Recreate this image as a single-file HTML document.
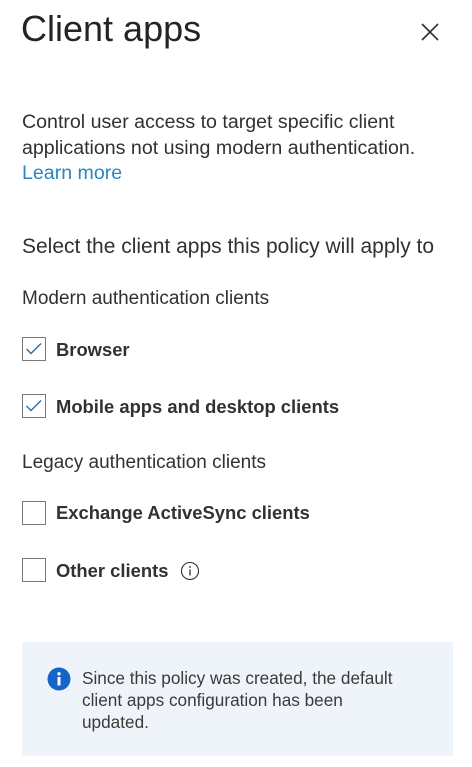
<!DOCTYPE html>
<html><head><meta charset="utf-8"><style>
body{margin:0;width:472px;height:767px;background:#fff;font-family:"Liberation Sans",sans-serif;color:#323130;position:relative;overflow:hidden}
.a{position:absolute;white-space:nowrap}
.cb{position:absolute;left:22px;width:24px;height:24px;border:1.5px solid #7a7a7a;box-sizing:border-box;background:#fff}
.lbl{font-size:18.4px;font-weight:600;left:56px;color:#323130}
</style></head><body>
<div class="a" style="left:21px;top:8px;font-size:36px;color:#252423">Client apps</div>
<svg class="a" style="left:420px;top:22px" width="20" height="20" viewBox="0 0 20 20"><path d="M2 2L18 18M18 2L2 18" stroke="#323130" stroke-width="1.6"/></svg>
<div class="a" style="left:22px;top:110px;font-size:19.6px;line-height:25.5px;color:#323130">Control user access to target specific client<br>applications not using modern authentication.<br><span style="color:#2a86bd">Learn more</span></div>
<div class="a" style="left:22px;top:235px;font-size:21px">Select the client apps this policy will apply to</div>
<div class="a" style="left:22px;top:288px;font-size:19px">Modern authentication clients</div>
<div class="cb" style="top:337px"><svg width="21" height="21" viewBox="0 0 21 21"><path d="M3.5 11l4.5 4.5 10-10" stroke="#2a6ea8" stroke-width="1.4" fill="none"/></svg></div>
<div class="a lbl" style="top:339px">Browser</div>
<div class="cb" style="top:394px"><svg width="21" height="21" viewBox="0 0 21 21"><path d="M3.5 11l4.5 4.5 10-10" stroke="#2a6ea8" stroke-width="1.4" fill="none"/></svg></div>
<div class="a lbl" style="top:396px">Mobile apps and desktop clients</div>
<div class="a" style="left:22px;top:452px;font-size:19px">Legacy authentication clients</div>
<div class="cb" style="top:501px"></div>
<div class="a lbl" style="top:502px">Exchange ActiveSync clients</div>
<div class="cb" style="top:558px"></div>
<div class="a lbl" style="top:560px">Other clients</div>
<svg class="a" style="left:180px;top:561px" width="20" height="20" viewBox="0 0 20 20"><circle cx="10" cy="10" r="8.5" stroke="#323130" stroke-width="1.1" fill="none"/><path d="M10 8.5v6" stroke="#323130" stroke-width="1.3"/><circle cx="10" cy="6" r="0.9" fill="#323130"/></svg>
<div class="a" style="left:22px;top:642px;width:431px;height:114px;background:#eff4fb"></div>
<svg class="a" style="left:47px;top:667px" width="24" height="24" viewBox="0 0 24 24"><circle cx="12" cy="12" r="11.5" fill="#1565c8"/><rect x="10.5" y="10" width="3" height="8.5" fill="#fff"/><circle cx="12" cy="6.8" r="1.7" fill="#fff"/></svg>
<div class="a" style="left:82px;top:667px;font-size:17.2px;line-height:22px;color:#3b3a39">Since this policy was created, the default<br>client apps configuration has been<br>updated.</div>
</body></html>
